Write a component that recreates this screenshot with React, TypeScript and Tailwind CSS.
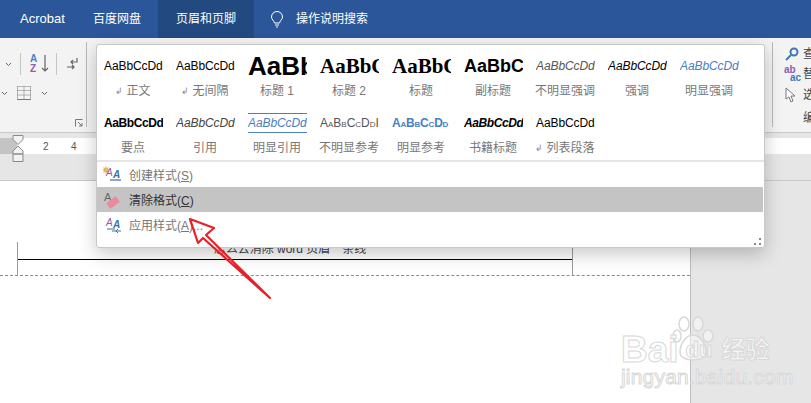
import React from 'react';

const cjk = "font-['Liberation_Sans','Noto_Sans_CJK_SC',sans-serif]";
const serif = "font-['Liberation_Serif','Noto_Sans_CJK_SC',serif]";

const STYLES = [
  { preview: 'AaBbCcDd', label: '正文', mark: true, cls: 'text-[12px] tracking-[-0.1px] text-black' },
  { preview: 'AaBbCcDd', label: '无间隔', mark: true, cls: 'text-[12px] tracking-[-0.1px] text-black' },
  { preview: 'AaBbCcDd', label: '标题 1', cls: 'text-[26px] font-bold text-black' },
  { preview: 'AaBbCcDd', label: '标题 2', cls: `text-[21px] font-bold text-black ${serif}` },
  { preview: 'AaBbCcDd', label: '标题', cls: `text-[21px] font-bold text-black ${serif}` },
  { preview: 'AaBbCcDd', label: '副标题', cls: 'text-[18px] font-bold text-black' },
  { preview: 'AaBbCcDd', label: '不明显强调', cls: 'text-[12px] tracking-[-0.1px] italic text-[#555]' },
  { preview: 'AaBbCcDd', label: '强调', cls: 'text-[12px] tracking-[-0.1px] italic text-black' },
  { preview: 'AaBbCcDd', label: '明显强调', cls: 'text-[12px] tracking-[-0.1px] italic text-[#4a7fc1]' },
  { preview: 'AaBbCcDd', label: '要点', cls: 'text-[12px] tracking-[-0.4px] font-bold text-black' },
  { preview: 'AaBbCcDd', label: '引用', cls: 'text-[12px] tracking-[-0.1px] italic text-[#444]' },
  { preview: 'AaBbCcDd', label: '明显引用', cls: 'text-[12px] tracking-[-0.1px] italic text-[#4a7fc1]', ruled: true },
  { preview: 'AaBbCcDdI', label: '不明显参考', cls: 'text-[12px] text-[#555] [font-variant:small-caps]' },
  { preview: 'AaBbCcDd', label: '明显参考', cls: 'text-[12px] font-bold tracking-[-0.2px] text-[#4a7fc1] [font-variant:small-caps]' },
  { preview: 'AaBbCcDd', label: '书籍标题', cls: 'text-[12px] tracking-[-0.4px] font-bold italic text-black' },
  { preview: 'AaBbCcDd', label: '列表段落', mark: true, cls: 'text-[12px] tracking-[-0.1px] text-black' },
];

const Chevron = () => (
  <svg width="7" height="5" viewBox="0 0 7 5" fill="none" stroke="#666" strokeWidth="1">
    <path d="M1 1l2.5 2.5L6 1" />
  </svg>
);

const StyleCell = ({ item }: { item: (typeof STYLES)[number] }) => (
  <div className="flex h-[57px] w-[72px] flex-col items-center">
    <div className="flex h-[38px] w-full items-center pl-[7px] pr-[6px] pt-[4px]">
      <div
        className={`w-full overflow-hidden whitespace-nowrap leading-[18px] ${item.cls} ${
          item.ruled ? 'border-y border-[#4a7fc1]' : ''
        }`}
      >
        {item.preview}
      </div>
    </div>
    <div className="flex items-center gap-[3px] text-[12px] leading-[16px] text-[#777]">
      {item.mark && <span className="text-[9px] text-[#888]">↲</span>}
      {item.label}
    </div>
  </div>
);

const MenuItem = ({
  icon,
  label,
  hot,
  tail,
  active,
}: {
  icon: React.ReactNode;
  label: string;
  hot: string;
  tail?: string;
  active?: boolean;
}) => (
  <div className={`flex h-[25px] items-center ${active ? 'bg-[#c4c4c4] text-[#333]' : 'text-[#777]'}`}>
    <div className="flex w-[30px] justify-center">{icon}</div>
    <span className="ml-[2px] pt-[2px] text-[12px]">
      {label}(<span className="underline">{hot}</span>){tail}
    </span>
  </div>
);

const AIcon = ({ kind }: { kind: 'new' | 'clear' | 'apply' }) => (
  <svg width="18" height="18" viewBox="0 0 18 18">
    {kind === 'clear' ? (
      <>
        <text x="1" y="10" fontSize="11" fill="#666" fontFamily="Liberation Sans">A</text>
        <rect x="4" y="8" width="12" height="7" rx="1" fill="#e98a9e" transform="rotate(-38 10 11.5)" />
      </>
    ) : (
      <>
        {kind === 'new' && <path d="M3 0l1 2 2-1-1 2 2 1-2 1 1 2-2-1-1 2-1-2-2 1 1-2-2-1 2-1-1-2 2 1z" fill="#e8b463" />}
        <text x="3" y="10" fontSize="10" fontStyle="italic" fill="#8a5fb0" fontFamily="Liberation Sans">A</text>
        <text x="10" y="12" fontSize="10" fontWeight="700" fontStyle="italic" fill="#3b6fa8" fontFamily="Liberation Sans">A</text>
        {kind === 'new' ? (
          <path d="M7 14h11" stroke="#3b6fa8" strokeWidth="1.2" />
        ) : (
          <path d="M4 13h8M9 15h9M15 13l-2 2 2 2" fill="none" stroke="#3b6fa8" strokeWidth="1" />
        )}
      </>
    )}
  </svg>
);

const Hourglass = () => (
  <svg width="12" height="28" viewBox="0 0 12 28" fill="#f2f2f2" stroke="#8a8a8a" strokeWidth="1">
    <path d="M1 .5h10v4L6 9.5 1 4.5zM6 11l5 5v3H1v-3zM1 19h10v7.5H1z" />
  </svg>
);

export default function App() {
  return (
    <div className={`relative flex h-[403px] w-[811px] flex-col overflow-hidden bg-[#e6e6e6] ${cjk}`}>
      {/* Title bar */}
      <div className="flex h-[38px] shrink-0 items-center bg-[#2b579a] text-[12px] text-white">
        <span className="ml-[20px] w-[73px] text-[13px]">Acrobat</span>
        <span className="w-[65px]">百度网盘</span>
        <div className="flex h-full w-[96px] items-center justify-center bg-[#224a80]">页眉和页脚</div>
        <svg className="ml-[16px]" width="14" height="17" viewBox="0 0 14 17" fill="none" stroke="#fff" strokeWidth="1">
          <path d="M4.5 12C4 9.5 1.500 8.500 1.500 6a5.500 5.500 0 0111 0c0 2.500-2.500 3.500-3 6zM5 14h4M6 16h2" />
        </svg>
        <span className="ml-[12px]">操作说明搜索</span>
      </div>

      {/* Ribbon */}
      <div className="flex h-[94px] shrink-0 bg-[#f3f3f3] pb-[5px] pt-[4px]">
        <div className="flex h-full w-[87px] shrink-0 flex-col border-r border-[#b8b8b8] pt-[6px]">
          <div className="flex h-[32px] items-center">
            <div className="ml-[5px]"><Chevron /></div>
            <div className="ml-[8px] h-[22px] w-px bg-[#c6c6c6]" />
            <div className="ml-[9px] flex w-[11px] flex-col text-[10px] font-bold leading-[10px]">
              <span className="text-[#4a7fc1]">A</span>
              <span className="text-[#8a5fb0]">Z</span>
            </div>
            <svg width="8" height="18" viewBox="0 0 8 18" fill="none" stroke="#666" strokeWidth="1.200">
              <path d="M4 0v16M1 13l3 3 3-3" />
            </svg>
            <div className="ml-[7px] h-[22px] w-px bg-[#c6c6c6]" />
            <svg className="ml-[9px]" width="13" height="14" viewBox="0 0 13 14" fill="none" stroke="#666" strokeWidth="1.200">
              <path d="M11 1v4H5M7 3L5 5l2 2M1 10h7M6 8l2 2-2 2" />
            </svg>
          </div>
          <div className="mt-[5px] flex h-[16px] items-center">
            <div className="ml-[1px]"><Chevron /></div>
            <svg className="ml-[9px]" width="14" height="14" viewBox="0 0 14 14" fill="none" stroke="#777" strokeWidth="1">
              <path d="M.5.5h13M.5 4.500h13M.5 9h13M.5.5v13M7 .5v13M13.500.5v13" strokeDasharray="1 1" />
              <path d="M0 13.500h14" />
            </svg>
            <div className="ml-[10px]"><Chevron /></div>
          </div>
          <div className="mr-[3px] mt-auto flex justify-end">
            <svg width="8" height="8" viewBox="0 0 8 8" fill="none" stroke="#777" strokeWidth="1">
              <path d="M.5 7.500v-7h7M3 3l4 4M7 4v3H4" />
            </svg>
          </div>
        </div>
        <div className="flex-1" />
        <div className="h-full w-px bg-[#b8b8b8]" />
        <div className="flex w-[38px] shrink-0 flex-col overflow-hidden pl-[12px] pt-[3px] text-[12px] text-[#444]">
          <div className="flex h-[20px] items-center whitespace-nowrap">
            <svg className="shrink-0" width="14" height="14" viewBox="0 0 14 14" fill="none" stroke="#3f78b5" strokeWidth="2">
              <circle cx="9" cy="5" r="3.500" />
              <path d="M6 8l-5 5" />
            </svg>
            <span className="ml-[4px] shrink-0">查找</span>
          </div>
          <div className="flex h-[22px] items-center whitespace-nowrap">
            <div className="-ml-[1px] flex w-[17px] shrink-0 flex-col text-[10px] font-bold leading-[8px]">
              <span className="text-[#8a5fb0]">ab</span>
              <span className="text-right text-[#3f78b5]">ac</span>
            </div>
            <span className="ml-[2px] shrink-0">替换</span>
          </div>
          <div className="flex h-[22px] items-center whitespace-nowrap">
            <svg className="shrink-0" width="11" height="16" viewBox="0 0 11 16" fill="#fff" stroke="#777" strokeWidth="1">
              <path d="M1 1v11l3-2 2 5 2-1-2-5h4z" />
            </svg>
            <span className="ml-[7px] shrink-0">选择</span>
          </div>
          <div className="ml-[18px] mt-[4px] whitespace-nowrap">编辑</div>
        </div>
      </div>

      {/* Ruler band */}
      <div className="flex h-[49px] shrink-0 flex-col border-y border-[#c8c8c8] bg-[#e6e6e6] pt-[5px]">
        <div className="relative flex h-[16px] items-center bg-white text-[10px] text-[#555]">
          <div className="h-full w-[17px] bg-[#c4c4c4]" />
          <span className="ml-[26px] w-[28px]">2</span>
          <span>4</span>
          <div className="absolute left-[12px] top-[-3px]"><Hourglass /></div>
        </div>
      </div>

      {/* Document area */}
      <div className="flex flex-1">
        <div className="flex w-[691px] shrink-0 flex-col border-r border-[#bdbdbd] bg-white">
          <div className="ml-[17px] mt-[61px] flex h-[33px] w-[556px] flex-col border-x border-[#9a9a9a]">
            <div className="flex h-[18px] items-end justify-center border-b border-black pb-[3px] pr-[10px] text-[12px] leading-[14px] text-[#444]">
              怎么去消除 word 页眉一条线
            </div>
          </div>
          <div className="border-t border-dashed border-[#8a8a8a]" />
        </div>
      </div>

      {/* Styles dropdown */}
      <div className="absolute left-[96px] top-[44px] flex h-[204px] w-[669px] flex-col rounded-[3px] border border-[#c8c8c8] bg-white shadow-[0_6px_18px_rgba(0,0,0,0.22)]">
        <div className="grid grid-cols-[repeat(9,72px)] border-b-2 border-[#e4e4ea] pb-px">
          {STYLES.map((item, i) => (
            <StyleCell key={i} item={item} />
          ))}
        </div>
        <MenuItem icon={<AIcon kind="new" />} label="创建样式" hot="S" />
        <div className="pr-px"><MenuItem icon={<AIcon kind="clear" />} label="清除格式" hot="C" active /></div>
        <MenuItem icon={<AIcon kind="apply" />} label="应用样式" hot="A" tail="..." />
        <div className="mt-auto flex justify-end pb-[2px] pr-[3px]">
          <svg width="7" height="7" viewBox="0 0 7 7" fill="#888">
            <path d="M5 0h2v2H5zM0 5h2v2H0zM5 5h2v2H5z" />
          </svg>
        </div>
      </div>

      {/* Red annotation arrow */}
      <svg className="absolute left-[180px] top-[210px]" width="100" height="100" viewBox="180 210 100 100">
        <path d="M190 219L214 228 206 235 270 298 203 238 198 243Z" fill="none" stroke="#e8202a" strokeWidth="2.200" strokeLinejoin="round" />
      </svg>

      {/* Baidu watermark */}
      <div className="pointer-events-none absolute left-[621px] top-[316px] flex w-[150px] flex-col items-start text-[rgba(255,255,255,0.6)] [-webkit-text-stroke:1px_#d8d8d8]">
        <svg className="absolute left-[50px] top-0" width="44" height="46" viewBox="0 0 44 46" fill="rgba(255,255,255,0.45)" stroke="#d8d8d8" strokeWidth="1.500">
          <ellipse cx="13" cy="8" rx="5" ry="7" />
          <ellipse cx="27" cy="8" rx="5" ry="7" />
          <ellipse cx="37" cy="20" rx="5" ry="6" />
          <ellipse cx="6" cy="20" rx="4" ry="6" />
          <path d="M9 36c0-8 6-17 13-17s14 10 13 18c-1 6-7 7-13 7s-13-2-13-8z" />
        </svg>
        <div className="relative mt-[19px] flex items-center whitespace-nowrap text-[37px] font-bold leading-[30px]">
          <span>Bai</span>
          <span className="ml-[7px] text-[22px]">du</span>
          <span className="ml-[9px] text-[24px]">经验</span>
        </div>
        <div className="whitespace-nowrap text-[21px] leading-[24px] tracking-[0.2px]">jingyan.baidu.com</div>
      </div>
    </div>
  );
}
